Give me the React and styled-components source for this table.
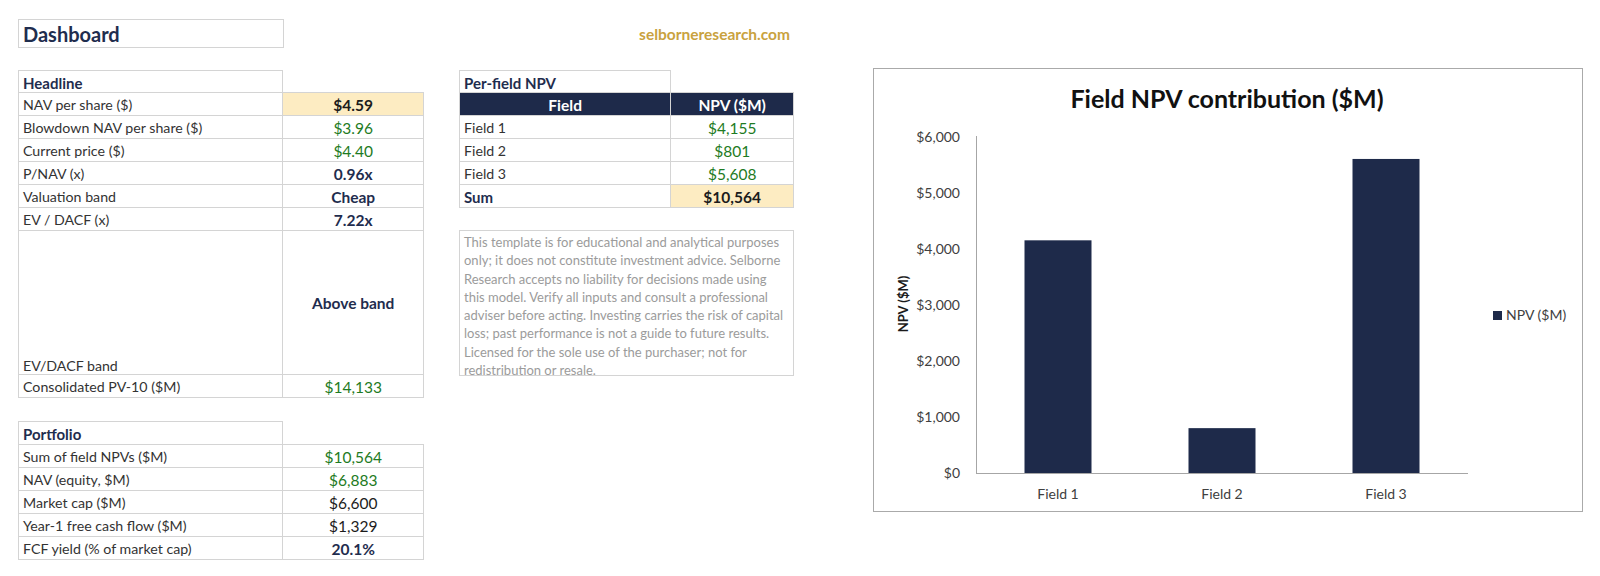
import React from 'react';
import styled, { createGlobalStyle } from 'styled-components';

const GlobalStyle = createGlobalStyle`
  body {
    margin: 0;
    background: #ffffff;
    font-family: Lato, "Liberation Sans", sans-serif;
  }
`;

const tones = {
  green: '#1e7b23',
  navy: '#1f2d4e',
  dark: '#1c1c1c',
  plain: '#333333',
  white: '#ffffff',
};

const fills = {
  yellow: '#fdecc2',
  navy: '#1e2a4a',
};

const headline = [
  { label: 'NAV per share ($)', value: '$4.59', tone: 'dark', bold: true, fill: 'yellow' },
  { label: 'Blowdown NAV per share ($)', value: '$3.96', tone: 'green' },
  { label: 'Current price ($)', value: '$4.40', tone: 'green' },
  { label: 'P/NAV (x)', value: '0.96x', tone: 'navy', bold: true },
  { label: 'Valuation band', value: 'Cheap', tone: 'navy', bold: true },
  { label: 'EV / DACF (x)', value: '7.22x', tone: 'navy', bold: true },
];

const portfolio = [
  { label: 'Sum of field NPVs ($M)', value: '$10,564', tone: 'green' },
  { label: 'NAV (equity, $M)', value: '$6,883', tone: 'green' },
  { label: 'Market cap ($M)', value: '$6,600', tone: 'dark' },
  { label: 'Year-1 free cash flow ($M)', value: '$1,329', tone: 'dark' },
  { label: 'FCF yield (% of market cap)', value: '20.1%', tone: 'navy', bold: true },
];

const fields = [
  { name: 'Field 1', npv: 4155, text: '$4,155' },
  { name: 'Field 2', npv: 801, text: '$801' },
  { name: 'Field 3', npv: 5608, text: '$5,608' },
];

const disclaimer = [
  'This template is for educational and analytical purposes',
  'only; it does not constitute investment advice. Selborne',
  'Research accepts no liability for decisions made using',
  'this model. Verify all inputs and consult a professional',
  'adviser before acting. Investing carries the risk of capital',
  'loss; past performance is not a guide to future results.',
  'Licensed for the sole use of the purchaser; not for',
  'redistribution or resale.',
];

const Page = styled.div`
  display: flex;
  align-items: flex-start;
  padding: 19px 0 0 18px;
`;

const Column = styled.div`
  display: flex;
  flex-direction: column;
  width: ${(p) => p.$width}px;
  margin-left: ${(p) => p.$offset || 0}px;
`;

const TitleBox = styled.div`
  box-sizing: border-box;
  width: 266px;
  height: 29px;
  border: 1px solid #d4d4d4;
  padding: 0 4px;
  font-size: 20px;
  font-weight: 700;
  color: #1f2d4e;
  line-height: 28px;
`;

const SiteLink = styled.div`
  height: 29px;
  line-height: 30px;
  text-align: right;
  padding-right: 4px;
  font-size: 15.5px;
  font-weight: 700;
  color: #c9a23f;
`;

const Sheet = styled.table`
  border-collapse: collapse;
  table-layout: fixed;
  margin-top: ${(p) => p.$gap}px;
`;

const Row = styled.tr`
  height: ${(p) => p.$h || 23}px;
`;

const Cell = styled.td`
  border: ${(p) => (p.$blank ? 'none' : '1px solid #d4d4d4')};
  padding: 2px 4px 0;
  font-size: ${(p) => (p.$value ? 15.5 : 14.2)}px;
  font-weight: ${(p) => (p.$bold ? 700 : 400)};
  color: ${(p) => tones[p.$tone || 'plain']};
  background: ${(p) => (p.$fill ? fills[p.$fill] : 'transparent')};
  text-align: ${(p) => (p.$value ? 'center' : 'left')};
  vertical-align: ${(p) => p.$valign || 'middle'};
  white-space: nowrap;
  overflow: hidden;
  line-height: 1.2;
`;

const SectionCell = styled(Cell)`
  font-size: 15px;
  font-weight: 700;
  color: #1f2d4e;
`;

const Disclaimer = styled.div`
  box-sizing: border-box;
  margin-top: 22px;
  height: 146px;
  border: 1px solid #d4d4d4;
  padding: 2px 4px 0;
  overflow: hidden;
  font-size: 13px;
  line-height: 18.3px;
  color: #9b9b9b;
  white-space: nowrap;
`;

const ChartPanel = styled.div`
  box-sizing: border-box;
  margin: 49px 0 0 79px;
  width: 710px;
  height: 444px;
  border: 1px solid #aaaaaa;
  background: #ffffff;

  svg {
    display: block;
    font-family: Lato, "Liberation Sans", sans-serif;
  }
`;

const ValueRow = ({ row }) => (
  <Row>
    <Cell>{row.label}</Cell>
    <Cell $value $tone={row.tone} $bold={row.bold} $fill={row.fill}>
      {row.value}
    </Cell>
  </Row>
);

const cols = (a, b) => (
  <colgroup>
    <col style={{ width: a }} />
    <col style={{ width: b }} />
  </colgroup>
);

const FieldChart = () => {
  const left = 102;
  const bottom = 404;
  const right = 594;
  const perK = 56;
  const cat = (right - left) / fields.length;
  const barW = 67;
  const ticks = [0, 1000, 2000, 3000, 4000, 5000, 6000];

  return (
    <svg width="708" height="442" viewBox="0 0 708 442">
      <text x="353" y="39" textAnchor="middle" fontSize="25" fontWeight="700" fill="#111">
        Field NPV contribution ($M)
      </text>

      {ticks.map((t) => (
        <text
          key={t}
          x="86"
          y={bottom - (t / 1000) * perK + 5}
          textAnchor="end"
          fontSize="14"
          fill="#404040"
        >
          ${t.toLocaleString('en-US')}
        </text>
      ))}

      <text
        transform="translate(34 235) rotate(-90)"
        textAnchor="middle"
        fontSize="13"
        fontWeight="700"
        fill="#1a1a1a"
      >
        NPV ($M)
      </text>

      {fields.map((f, i) => {
        const h = (f.npv / 1000) * perK;
        const x = left + i * cat + (cat - barW) / 2;
        return (
          <g key={f.name}>
            <rect x={x} y={bottom - h} width={barW} height={h} fill="#1e2a4a" />
            <text x={x + barW / 2} y="430" textAnchor="middle" fontSize="14" fill="#404040">
              {f.name}
            </text>
          </g>
        );
      })}

      <line x1={left + 0.5} y1="67" x2={left + 0.5} y2={bottom} stroke="#a6a6a6" />
      <line x1={left} y1={bottom + 0.5} x2={right} y2={bottom + 0.5} stroke="#a6a6a6" />

      <rect x="619" y="242" width="9" height="9" fill="#1e2a4a" />
      <text x="632" y="251" fontSize="14" fill="#404040">
        NPV ($M)
      </text>
    </svg>
  );
};

export default function App() {
  return (
    <>
      <GlobalStyle />
      <Page>
        <Column $width={406}>
          <TitleBox>Dashboard</TitleBox>

          <Sheet $gap={22}>
            {cols(265, 141)}
            <tbody>
              <Row $h={22}>
                <SectionCell>Headline</SectionCell>
                <Cell $blank />
              </Row>
              {headline.map((r) => (
                <ValueRow key={r.label} row={r} />
              ))}
              <Row $h={144}>
                <Cell $valign="bottom">EV/DACF band</Cell>
                <Cell $value $tone="navy" $bold>
                  Above band
                </Cell>
              </Row>
              <ValueRow row={{ label: 'Consolidated PV-10 ($M)', value: '$14,133', tone: 'green' }} />
            </tbody>
          </Sheet>

          <Sheet $gap={23}>
            {cols(265, 141)}
            <tbody>
              <Row>
                <SectionCell>Portfolio</SectionCell>
                <Cell $blank />
              </Row>
              {portfolio.map((r) => (
                <ValueRow key={r.label} row={r} />
              ))}
            </tbody>
          </Sheet>
        </Column>

        <Column $width={335} $offset={35}>
          <SiteLink>selborneresearch.com</SiteLink>

          <Sheet $gap={22}>
            {cols(212, 123)}
            <tbody>
              <Row $h={22}>
                <SectionCell>Per-field NPV</SectionCell>
                <Cell $blank />
              </Row>
              <Row>
                <Cell $value $bold $tone="white" $fill="navy">
                  Field
                </Cell>
                <Cell $value $bold $tone="white" $fill="navy">
                  NPV ($M)
                </Cell>
              </Row>
              {fields.map((f) => (
                <ValueRow key={f.name} row={{ label: f.name, value: f.text, tone: 'green' }} />
              ))}
              <Row>
                <SectionCell>Sum</SectionCell>
                <Cell $value $bold $tone="dark" $fill="yellow">
                  $10,564
                </Cell>
              </Row>
            </tbody>
          </Sheet>

          <Disclaimer>
            {disclaimer.map((line) => (
              <div key={line}>{line}</div>
            ))}
          </Disclaimer>
        </Column>

        <ChartPanel>
          <FieldChart />
        </ChartPanel>
      </Page>
    </>
  );
}
